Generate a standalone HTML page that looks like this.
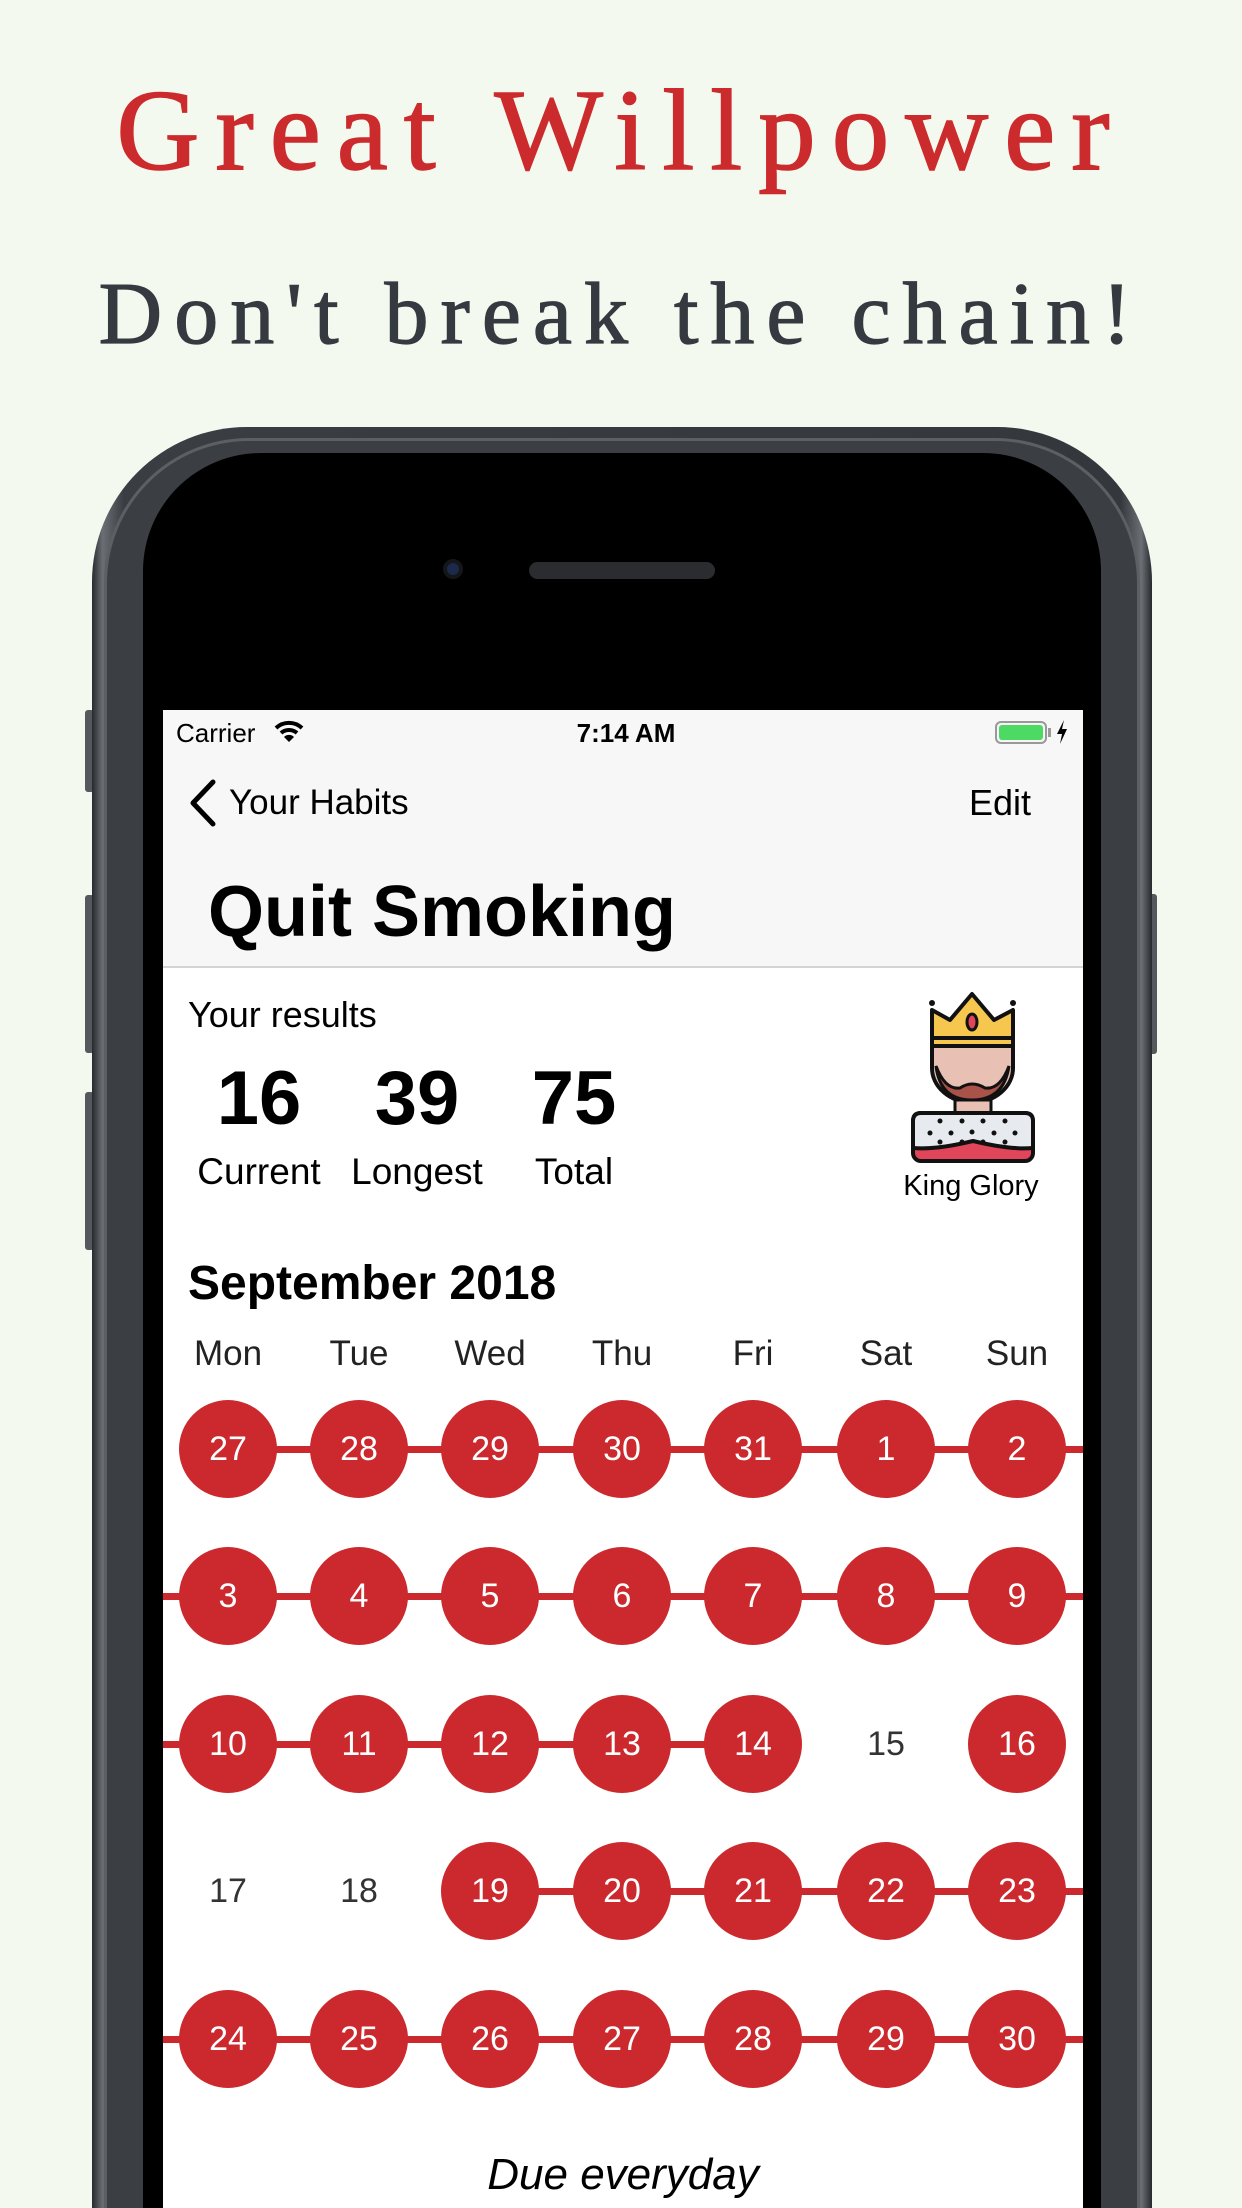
<!DOCTYPE html>
<html style="width:1242px;height:2208px;overflow:hidden"><head><meta charset="utf-8"><style>
*{margin:0;padding:0;box-sizing:border-box}
body{width:1242px;height:2208px;overflow:hidden;background:#f4f9ef;position:relative;font-family:"Liberation Sans",Arial,sans-serif}
.a{position:absolute}
.t1{left:0;width:1242px;text-align:center;top:56px;font-family:"Liberation Serif",serif;font-size:115px;letter-spacing:16px;color:#cc2b2d;line-height:150px;-webkit-text-stroke:1.5px #cc2b2d}
.t2{left:0;width:1242px;text-align:center;top:255px;font-family:"Liberation Serif",serif;font-size:88px;letter-spacing:12px;color:#353a40;line-height:120px;-webkit-text-stroke:1.2px #353a40}
.c{position:absolute;width:98px;height:98px;border-radius:50%;background:#cb292d;color:#fff;font-size:34px;line-height:98px;text-align:center}
.u{position:absolute;width:98px;height:98px;color:#333;font-size:34px;line-height:98px;text-align:center}
.ln{position:absolute;height:7px;background:#cb292d}
.wd{position:absolute;top:1334px;width:120px;text-align:center;font-size:35px;color:#222}
</style></head><body>
<div class="a t1">Great Willpower</div>
<div class="a t2">Don't break the chain!</div>

<div class="a" style="left:85px;top:710px;width:9px;height:82px;background:#55595e;border-radius:3px"></div>
<div class="a" style="left:85px;top:895px;width:9px;height:158px;background:#55595e;border-radius:3px"></div>
<div class="a" style="left:85px;top:1092px;width:9px;height:158px;background:#55595e;border-radius:3px"></div>
<div class="a" style="left:1148px;top:894px;width:9px;height:160px;background:#55595e;border-radius:3px"></div>

<div class="a" style="left:92px;top:427px;width:1060px;height:1781px;border-radius:155px 155px 0 0;background:linear-gradient(90deg,#26292d 0,#6b6f74 1%,#3a3e43 3%,#34383c 97%,#6b6f74 99%,#26292d 100%)"></div>
<div class="a" style="left:104px;top:438px;width:1036px;height:1770px;border-radius:145px 145px 0 0;background:#3b3f44;border:3px solid #5c6065;border-bottom:none"></div>
<div class="a" style="left:143px;top:453px;width:958px;height:1755px;border-radius:118px 118px 0 0;background:#000"></div>
<div class="a" style="left:443px;top:559px;width:20px;height:20px;border-radius:50%;background:#1b2a4a;border:4px solid #15161a"></div>
<div class="a" style="left:529px;top:562px;width:186px;height:17px;border-radius:9px;background:#2b2c2f"></div>

<div class="a" style="left:163px;top:710px;width:920px;height:1498px;background:#fff;overflow:hidden">
  <div class="a" style="left:0;top:0;width:920px;height:258px;background:#f7f7f7;border-bottom:2px solid #d4d4d4"></div>
  <div class="a" style="left:13px;top:8px;font-size:26px;color:#000;line-height:30px">Carrier</div>
  <svg class="a" style="left:111px;top:10px" width="30" height="24" viewBox="0 0 30 24"><path d="M2 8 A19 19 0 0 1 28 8" stroke="#000" stroke-width="4" fill="none"/><path d="M7 13 A12 12 0 0 1 23 13" stroke="#000" stroke-width="4" fill="none"/><path d="M15 22 L10 17 A7 7 0 0 1 20 17 Z" fill="#000"/></svg>
  <div class="a" style="left:360px;top:8px;width:206px;text-align:center;font-size:26px;font-weight:bold;line-height:30px">7:14 AM</div>
  <div class="a" style="left:832px;top:11px;width:52px;height:23px;border:2px solid #999;border-radius:6px;padding:2px"><div style="width:100%;height:100%;background:#4cd964;border-radius:3px"></div></div>
  <div class="a" style="left:885px;top:18px;width:3px;height:9px;background:#999"></div>
  <svg class="a" style="left:893px;top:10px" width="12" height="24" viewBox="0 0 12 24"><path d="M8 0 L1 14 H6 L4 24 L11 9 H6 Z" fill="#000"/></svg>
  <svg class="a" style="left:24px;top:68px" width="32" height="50" viewBox="0 0 32 50"><path d="M26 4 L6 25 L26 46" stroke="#000" stroke-width="5" fill="none" stroke-linecap="round" stroke-linejoin="round"/></svg>
  <div class="a" style="left:66px;top:73px;font-size:35px;line-height:40px">Your Habits</div>
  <div class="a" style="left:806px;top:73px;font-size:36px;line-height:40px">Edit</div>
  <div class="a" style="left:45px;top:160px;font-size:72px;font-weight:bold;line-height:84px">Quit Smoking</div>

  <div class="a" style="left:25px;top:283px;font-size:36px;line-height:44px">Your results</div>
  <div class="a" style="left:46px;top:344px;width:100px;text-align:center;font-size:76px;font-weight:bold;line-height:90px">16</div>
  <div class="a" style="left:204px;top:344px;width:100px;text-align:center;font-size:76px;font-weight:bold;line-height:90px">39</div>
  <div class="a" style="left:361px;top:344px;width:100px;text-align:center;font-size:76px;font-weight:bold;line-height:90px">75</div>
  <div class="a" style="left:16px;top:440px;width:160px;text-align:center;font-size:37px;line-height:44px">Current</div>
  <div class="a" style="left:174px;top:440px;width:160px;text-align:center;font-size:37px;line-height:44px">Longest</div>
  <div class="a" style="left:331px;top:440px;width:160px;text-align:center;font-size:37px;line-height:44px">Total</div>

  <svg class="a" style="left:737px;top:275px" width="145" height="180" viewBox="900 985 145 180">
    <circle cx="932" cy="1003" r="3" fill="#111"/><circle cx="1013" cy="1003" r="3" fill="#111"/>
    <path d="M932 1010 L950 1020 L972 994 L994 1020 L1013 1010 L1013 1046 L932 1046 Z" fill="#f5c74e" stroke="#111" stroke-width="4" stroke-linejoin="round"/>
    <path d="M932 1038 H1013" stroke="#111" stroke-width="4"/>
    <ellipse cx="972" cy="1022" rx="5" ry="8" fill="#e0455a" stroke="#111" stroke-width="3"/>
    <path d="M932 1046 H1013 V1068 A40 34 0 0 1 932 1068 Z" fill="#e8c1b4" stroke="#111" stroke-width="4"/>
    <path d="M936 1066 Q940 1100 972 1100 Q1004 1100 1009 1066 Q1000 1090 985 1088 Q972 1080 960 1088 Q945 1090 936 1066Z" fill="#a9524a" stroke="#111" stroke-width="3"/>
    <rect x="955" y="1100" width="36" height="16" fill="#e8c1b4" stroke="#111" stroke-width="3"/>
    <rect x="913" y="1113" width="120" height="48" rx="8" fill="#e0455a" stroke="#111" stroke-width="4"/>
    <path d="M913 1121 Q913 1113 921 1113 H1025 Q1033 1113 1033 1121 V1148 Q1010 1150 973 1141 Q936 1150 913 1148 Z" fill="#e7eaee" stroke="#111" stroke-width="4"/>
    <g fill="#111"><circle cx="940" cy="1121" r="2.5"/><circle cx="962" cy="1121" r="2.5"/><circle cx="983" cy="1121" r="2.5"/><circle cx="1005" cy="1121" r="2.5"/><circle cx="930" cy="1133" r="2.5"/><circle cx="951" cy="1133" r="2.5"/><circle cx="972" cy="1132" r="2.5"/><circle cx="994" cy="1133" r="2.5"/><circle cx="1015" cy="1133" r="2.5"/><circle cx="940" cy="1142" r="2.5"/><circle cx="962" cy="1142" r="2.5"/><circle cx="983" cy="1142" r="2.5"/><circle cx="1005" cy="1142" r="2.5"/></g>
  </svg>
  <div class="a" style="left:728px;top:459px;width:160px;text-align:center;font-size:29px;line-height:34px">King Glory</div>

  <div class="a" style="left:25px;top:546px;font-size:48px;font-weight:bold;line-height:56px">September 2018</div>
  <div class="wd" style="left:5px;top:624px">Mon</div>
  <div class="wd" style="left:136px;top:624px">Tue</div>
  <div class="wd" style="left:267px;top:624px">Wed</div>
  <div class="wd" style="left:399px;top:624px">Thu</div>
  <div class="wd" style="left:530px;top:624px">Fri</div>
  <div class="wd" style="left:663px;top:624px">Sat</div>
  <div class="wd" style="left:794px;top:624px">Sun</div>

  <div class="ln" style="left:65px;top:736px;width:855px"></div>
  <div class="ln" style="left:0;top:883px;width:920px"></div>
  <div class="ln" style="left:0;top:1031px;width:590px"></div>
  <div class="ln" style="left:327px;top:1178px;width:593px"></div>
  <div class="ln" style="left:0;top:1326px;width:920px"></div>

  <div class="c" style="left:16px;top:690px">27</div><div class="c" style="left:147px;top:690px">28</div><div class="c" style="left:278px;top:690px">29</div><div class="c" style="left:410px;top:690px">30</div><div class="c" style="left:541px;top:690px">31</div><div class="c" style="left:674px;top:690px">1</div><div class="c" style="left:805px;top:690px">2</div>
  <div class="c" style="left:16px;top:837px">3</div><div class="c" style="left:147px;top:837px">4</div><div class="c" style="left:278px;top:837px">5</div><div class="c" style="left:410px;top:837px">6</div><div class="c" style="left:541px;top:837px">7</div><div class="c" style="left:674px;top:837px">8</div><div class="c" style="left:805px;top:837px">9</div>
  <div class="c" style="left:16px;top:985px">10</div><div class="c" style="left:147px;top:985px">11</div><div class="c" style="left:278px;top:985px">12</div><div class="c" style="left:410px;top:985px">13</div><div class="c" style="left:541px;top:985px">14</div><div class="u" style="left:674px;top:985px">15</div><div class="c" style="left:805px;top:985px">16</div>
  <div class="u" style="left:16px;top:1132px">17</div><div class="u" style="left:147px;top:1132px">18</div><div class="c" style="left:278px;top:1132px">19</div><div class="c" style="left:410px;top:1132px">20</div><div class="c" style="left:541px;top:1132px">21</div><div class="c" style="left:674px;top:1132px">22</div><div class="c" style="left:805px;top:1132px">23</div>
  <div class="c" style="left:16px;top:1280px">24</div><div class="c" style="left:147px;top:1280px">25</div><div class="c" style="left:278px;top:1280px">26</div><div class="c" style="left:410px;top:1280px">27</div><div class="c" style="left:541px;top:1280px">28</div><div class="c" style="left:674px;top:1280px">29</div><div class="c" style="left:805px;top:1280px">30</div>

  <div class="a" style="left:260px;top:1440px;width:400px;text-align:center;font-size:44px;font-style:italic;line-height:50px">Due everyday</div>
</div>
</body></html>
